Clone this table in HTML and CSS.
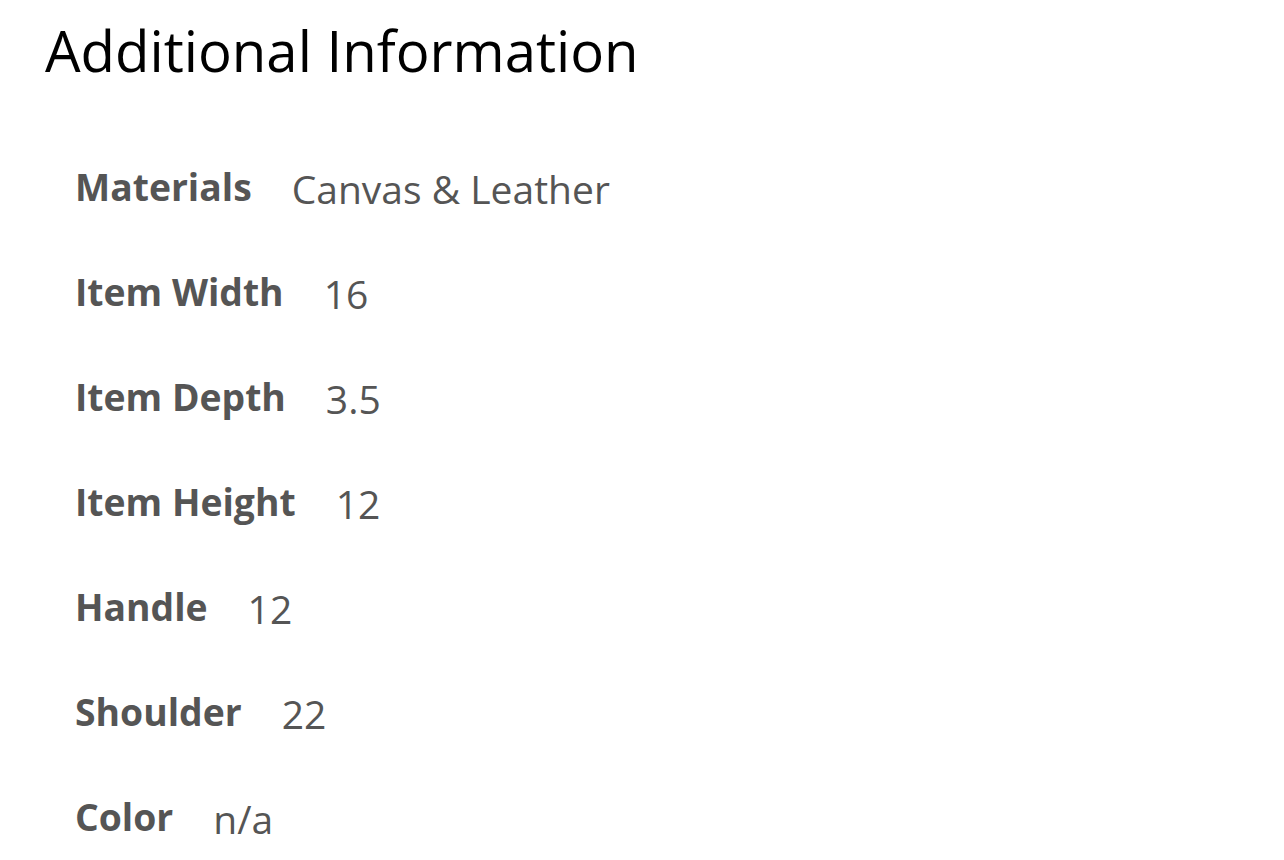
FILE: index.html
```html
<!DOCTYPE html>
<html>
<head>
<meta charset="utf-8">
<link rel="stylesheet" href="styles.css">
</head>
<body>
<div class="info">
  <h1 class="title">Additional Information</h1>
  <div class="rows">
    <div class="row"><span class="label">Materials</span><span class="value">Canvas &amp; Leather</span></div>
    <div class="row"><span class="label">Item Width</span><span class="value">16</span></div>
    <div class="row"><span class="label">Item Depth</span><span class="value">3.5</span></div>
    <div class="row"><span class="label">Item Height</span><span class="value">12</span></div>
    <div class="row"><span class="label">Handle</span><span class="value">12</span></div>
    <div class="row"><span class="label">Shoulder</span><span class="value">22</span></div>
    <div class="row"><span class="label">Color</span><span class="value">n/a</span></div>
  </div>
</div>
</body>
</html>
```
FILE: styles.css
```css
html, body {
  margin: 0;
  padding: 0;
  background: #fff;
}
body {
  font-family: "Open Sans", "Liberation Sans", sans-serif;
}
.info {
  padding: 14px 0 0 45px;
}
.title {
  margin: 0;
  font-size: 56.3px;
  font-weight: 500;
  line-height: 72px;
  color: #000;
}
.rows {
  display: flex;
  flex-direction: column;
  gap: 55px;
  padding: 76px 0 0 30px;
}
.row {
  display: flex;
  align-items: flex-start;
  gap: 40px;
  height: 50px;
  line-height: 50px;
  font-size: 37.3px;
  color: #555;
}
.label {
  font-weight: 700;
}
.value {
  font-weight: 400;
  font-size: 39px;
  padding-top: 2px;
}
```
